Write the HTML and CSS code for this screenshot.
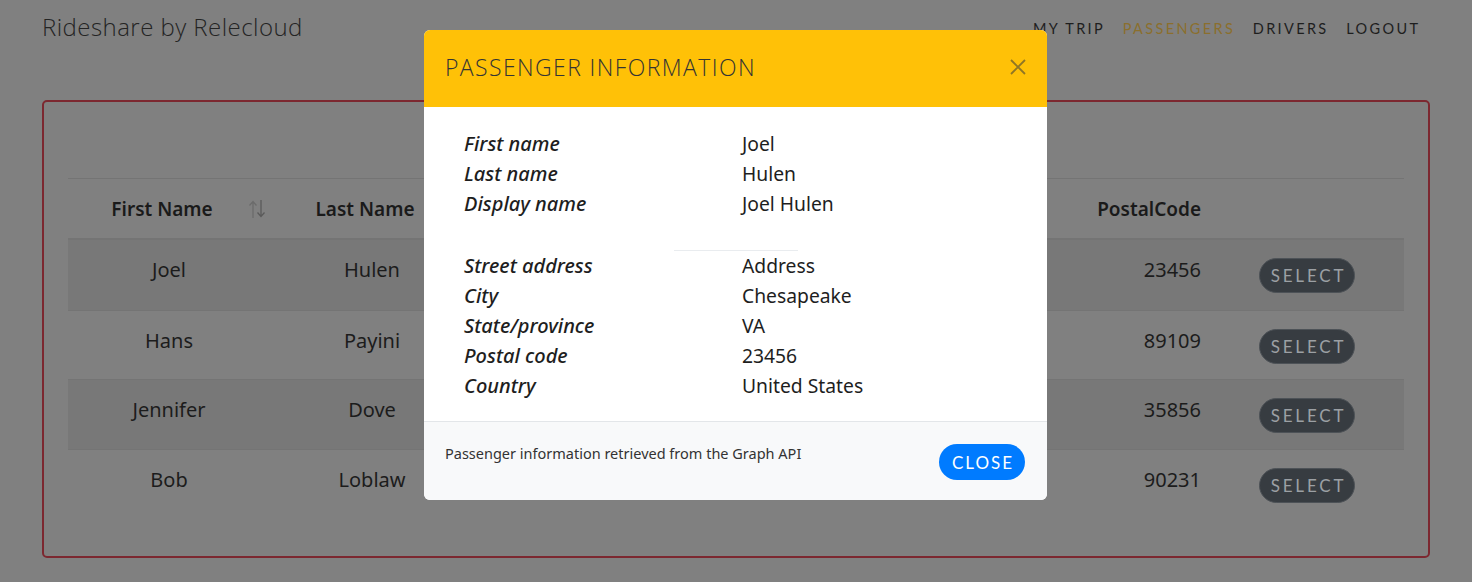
FILE: index.html
```html
<!DOCTYPE html>
<html lang="en">
<head>
<meta charset="utf-8">
<title>Rideshare by Relecloud - Passengers</title>
<link rel="stylesheet" href="styles.css">
</head>
<body>
<header class="topbar">
  <div class="brand">Rideshare by Relecloud</div>
  <nav class="nav">
    <a class="nav-link">My Trip</a>
    <a class="nav-link active">Passengers</a>
    <a class="nav-link">Drivers</a>
    <a class="nav-link">Logout</a>
  </nav>
</header>

<main class="container">
  <section class="card">
    <div class="table">
      <div class="tr thead">
        <div class="th sortable">First Name <span class="sort">
          <svg width="18" height="20" viewBox="0 0 18 20"><path d="M5 19V3M1.5 6.5 5 2.5l3.5 4" fill="none" stroke="#6b6b6b" stroke-width="1.3"/><path d="M13 1v16M9.5 13.5 13 17.5l3.5-4" fill="none" stroke="#5a5a5a" stroke-width="1.3"/></svg>
        </span></div>
        <div class="th shifted">Last Name</div>
        <div class="th"></div>
        <div class="th"></div>
        <div class="th"></div>
        <div class="th right">PostalCode</div>
        <div class="th"></div>
      </div>
      <div class="tr striped">
        <div class="td">Joel</div><div class="td">Hulen</div><div class="td"></div><div class="td"></div><div class="td"></div><div class="td right">23456</div><div class="td"><button class="btn-select">Select</button></div>
      </div>
      <div class="tr">
        <div class="td">Hans</div><div class="td">Payini</div><div class="td"></div><div class="td"></div><div class="td"></div><div class="td right">89109</div><div class="td"><button class="btn-select">Select</button></div>
      </div>
      <div class="tr striped">
        <div class="td">Jennifer</div><div class="td">Dove</div><div class="td"></div><div class="td"></div><div class="td"></div><div class="td right">35856</div><div class="td"><button class="btn-select">Select</button></div>
      </div>
      <div class="tr">
        <div class="td">Bob</div><div class="td">Loblaw</div><div class="td"></div><div class="td"></div><div class="td"></div><div class="td right">90231</div><div class="td"><button class="btn-select">Select</button></div>
      </div>
    </div>
  </section>
</main>

<div class="modal">
  <div class="modal-header">
    <h2 class="modal-title">Passenger Information</h2>
    <button class="modal-close" aria-label="Close">
      <svg width="18" height="18" viewBox="0 0 18 18"><path d="M2 2l14 14M16 2 2 16" stroke="#8f7625" stroke-width="1.8" fill="none"/></svg>
    </button>
  </div>
  <div class="modal-body">
    <dl class="info">
      <dt>First name</dt><dd>Joel</dd>
      <dt>Last name</dt><dd>Hulen</dd>
      <dt>Display name</dt><dd>Joel Hulen</dd>
    </dl>
    <hr class="divider">
    <dl class="info">
      <dt>Street address</dt><dd>Address</dd>
      <dt>City</dt><dd>Chesapeake</dd>
      <dt>State/province</dt><dd>VA</dd>
      <dt>Postal code</dt><dd>23456</dd>
      <dt>Country</dt><dd>United States</dd>
    </dl>
  </div>
  <div class="modal-footer">
    <p class="footer-note">Passenger information retrieved from the Graph API</p>
    <button class="btn-close">Close</button>
  </div>
</div>
</body>
</html>
```
FILE: styles.css
```css
* { box-sizing: border-box; }
html, body { margin: 0; padding: 0; }
body {
  background: #808080;
  font-family: "Noto Sans", "Open Sans", sans-serif;
  color: #1c1c1c;
  height: 582px;
  overflow: hidden;
}

.topbar {
  display: flex;
  justify-content: space-between;
  align-items: flex-start;
  padding: 10px 54px 0 42px;
  height: 100px;
}
.brand {
  font-family: "Open Sans", sans-serif;
  font-weight: 300;
  font-size: 24px;
  line-height: 34px;
  color: #242424;
  letter-spacing: 0.45px;
}
.nav {
  display: flex;
  gap: 20px;
  padding-top: 9px;
}
.nav-link {
  font-family: "Lato", sans-serif;
  font-size: 14.5px;
  line-height: 20px;
  text-transform: uppercase;
  letter-spacing: 2.35px;
  color: #1e1e1e;
  margin-right: -2.35px;
}
.nav-link.active { color: #8b6f2d; }

.container { padding: 0 42px; }
.card {
  border: 2px solid #7c2830;
  border-radius: 5px;
  height: 458px;
  padding: 76px 24px 0 24px;
}

.table { width: 100%; }
.tr {
  display: grid;
  grid-template-columns: 202px 204px 190px 190px 195px 180px 1fr;
  border-top: 1px solid #747474;
  height: 69.5px;
}
.tr.thead {
  height: 62px;
  border-bottom: 2px solid #747474;
}
.tr.thead + .tr { border-top: 0; }
.tr.striped { background: #787878; }
.th, .td {
  text-align: center;
}
.th {
  font-size: 19px;
  font-weight: 600;
  color: #1a1a1a;
  padding: 17px 14px 0 0;
}
.th.sortable { position: relative; }
.sort {
  position: absolute;
  right: 4px;
  top: 20px;
}
.td {
  font-size: 20px;
  padding-top: 16px;
  color: #1c1c1c;
}
.th.right, .td.right { text-align: right; padding-right: 28px; }
.td:last-child { text-align: left; padding: 18px 0 0 30px; }

.btn-select {
  font-family: "Lato", sans-serif;
  font-size: 17px;
  text-transform: uppercase;
  letter-spacing: 2.8px;
  color: #9ca0a4;
  background: #373c41;
  border: 1px solid #4d5257;
  border-radius: 18px;
  height: 35px;
  width: 96px;
  padding: 0 0 0 3px;
}

.modal {
  position: absolute;
  top: 30px;
  left: 424px;
  width: 623px;
  background: #fff;
  border-radius: 6px;
  overflow: hidden;
}
.modal-header {
  background: #ffc107;
  height: 77px;
  display: flex;
  align-items: center;
  justify-content: space-between;
  padding: 0 20px 3px 21px;
}
.modal-title {
  margin: 0;
  font-family: "Open Sans", sans-serif;
  font-weight: 300;
  font-size: 23px;
  text-transform: uppercase;
  letter-spacing: 1.4px;
  color: #343434;
}
.modal-close {
  background: none;
  border: 0;
  padding: 0;
  display: flex;
}
.modal-body { padding: 22px 40px 20px 40px; }
.info {
  display: grid;
  grid-template-columns: 278px 1fr;
  margin: 0;
  line-height: 30px;
  color: #1e1e1e;
}
.info dt { font-style: italic; font-weight: 500; font-size: 20px; }
.info dd { margin: 0; font-size: 19.3px; }
.divider {
  width: 124px;
  margin: 31px auto 0;
  border: 0;
  border-top: 1px solid #e9ecef;
}
.modal-footer {
  background: #f8f9fa;
  border-top: 1px solid #e3e6e9;
  height: 79px;
  display: flex;
  justify-content: space-between;
  align-items: flex-start;
  padding: 21px 22px 0 21px;
}
.footer-note {
  margin: 0;
  font-size: 14.5px;
  line-height: 20px;
  color: #333;
}
.btn-close {
  margin-top: 1px;
  font-family: "Lato", sans-serif;
  font-size: 17px;
  text-transform: uppercase;
  letter-spacing: 2px;
  color: #fff;
  background: #007bff;
  border: 0;
  border-radius: 18px;
  height: 36px;
  width: 86px;
  padding: 0 0 0 2px;
}
```
